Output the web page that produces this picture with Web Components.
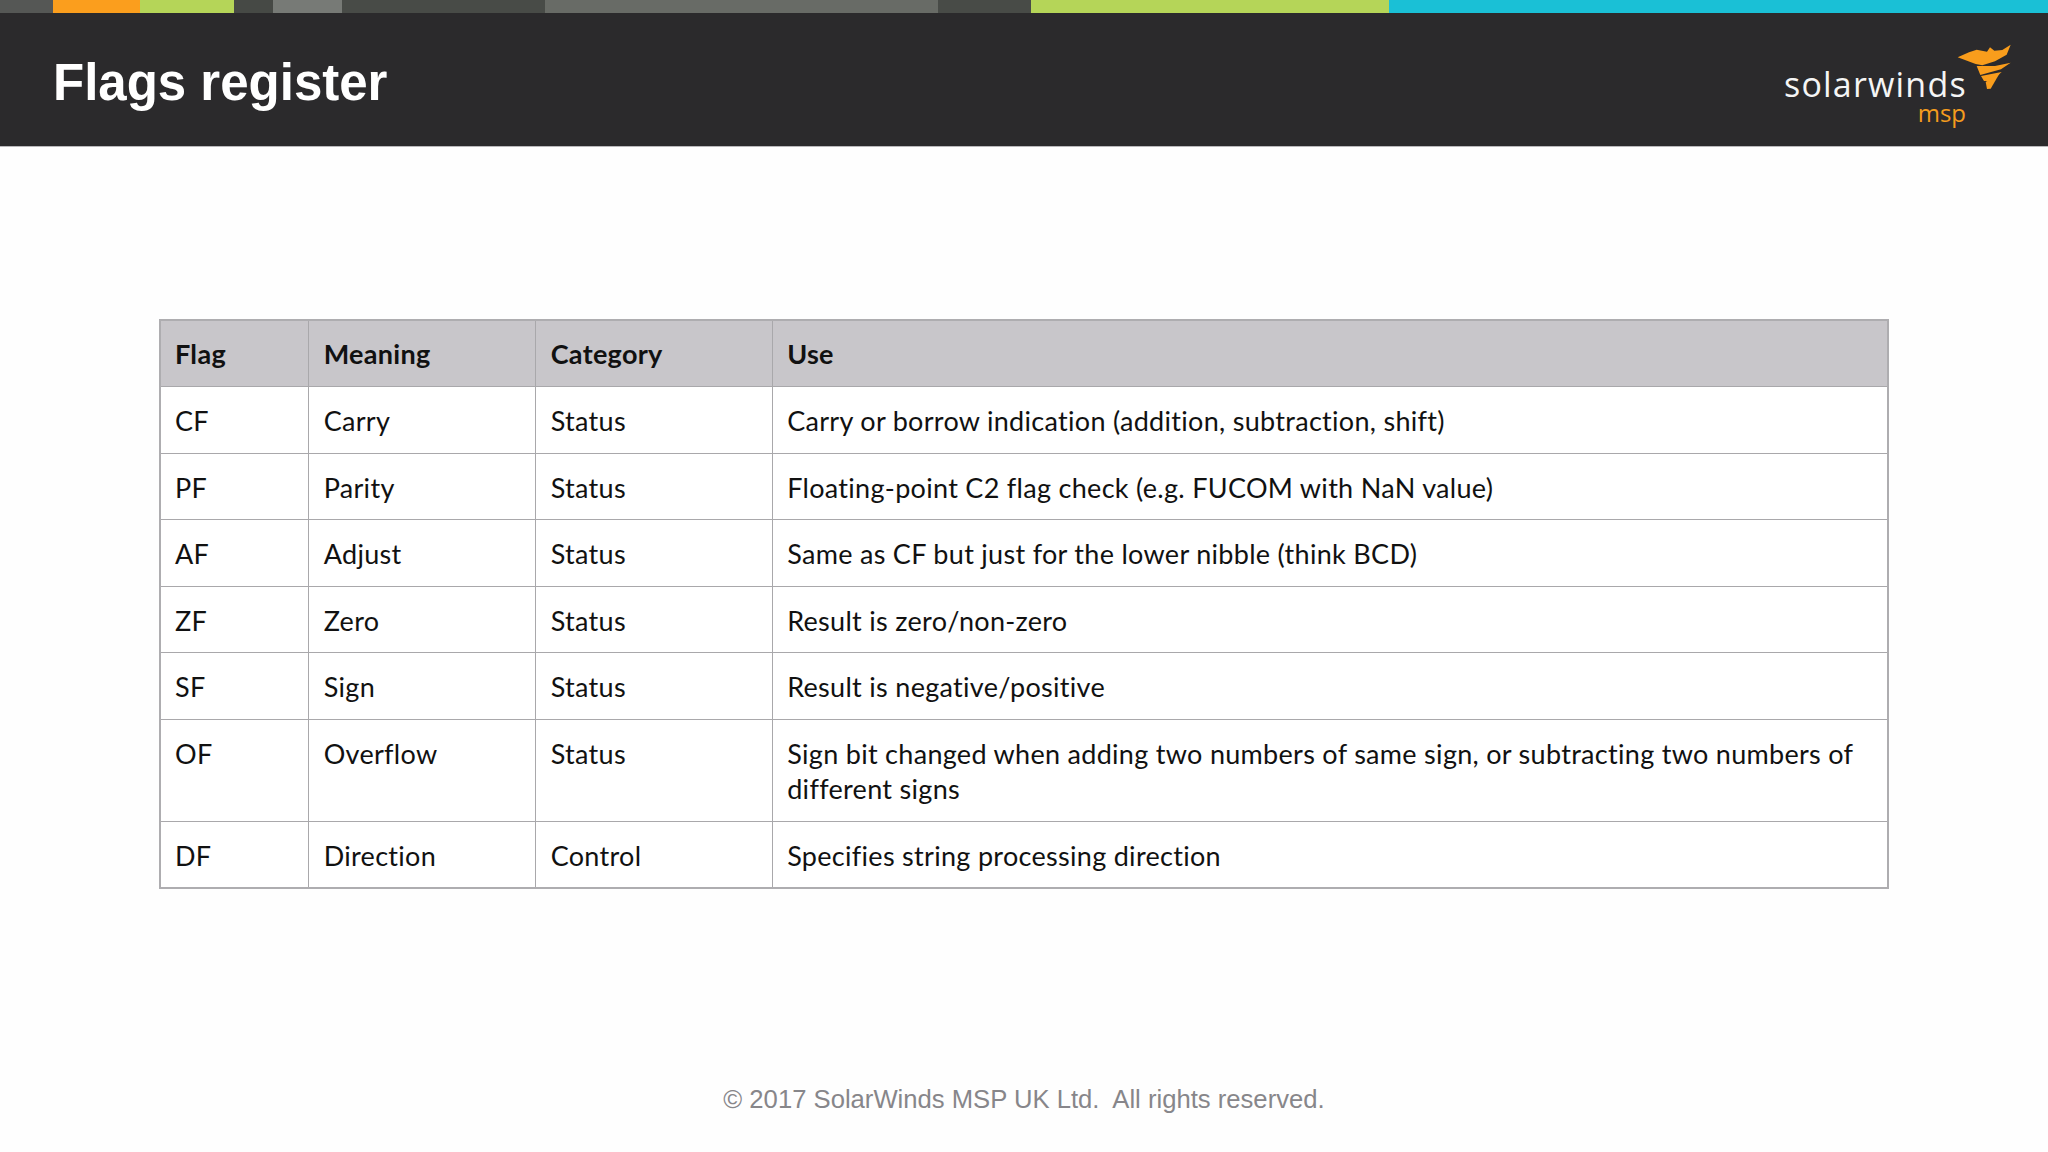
<!DOCTYPE html>
<html lang="en"><head><meta charset="utf-8"><title>Flags register</title>
<style>
html,body{margin:0;padding:0;background:#fefefe}
</style></head><body>
<slide-page>
  <brand-stripe slot="stripe"></brand-stripe>
  <slide-header slot="header">Flags register<brand-logo slot="logo"></brand-logo></slide-header>
  <flag-table>
    <flag-row head><flag-cell>Flag</flag-cell><flag-cell>Meaning</flag-cell><flag-cell>Category</flag-cell><flag-cell>Use</flag-cell></flag-row>
    <flag-row><flag-cell>CF</flag-cell><flag-cell>Carry</flag-cell><flag-cell>Status</flag-cell><flag-cell>Carry or borrow indication (addition, subtraction, shift)</flag-cell></flag-row>
    <flag-row><flag-cell>PF</flag-cell><flag-cell>Parity</flag-cell><flag-cell>Status</flag-cell><flag-cell>Floating-point C2 flag check (e.g. FUCOM with NaN value)</flag-cell></flag-row>
    <flag-row><flag-cell>AF</flag-cell><flag-cell>Adjust</flag-cell><flag-cell>Status</flag-cell><flag-cell>Same as CF but just for the lower nibble (think BCD)</flag-cell></flag-row>
    <flag-row><flag-cell>ZF</flag-cell><flag-cell>Zero</flag-cell><flag-cell>Status</flag-cell><flag-cell>Result is zero/non-zero</flag-cell></flag-row>
    <flag-row><flag-cell>SF</flag-cell><flag-cell>Sign</flag-cell><flag-cell>Status</flag-cell><flag-cell>Result is negative/positive</flag-cell></flag-row>
    <flag-row><flag-cell>OF</flag-cell><flag-cell>Overflow</flag-cell><flag-cell>Status</flag-cell><flag-cell>Sign bit changed when adding two numbers of same sign, or subtracting two numbers of different signs</flag-cell></flag-row>
    <flag-row><flag-cell>DF</flag-cell><flag-cell>Direction</flag-cell><flag-cell>Control</flag-cell><flag-cell>Specifies string processing direction</flag-cell></flag-row>
  </flag-table>
  <slide-footer slot="footer">© 2017 SolarWinds MSP UK Ltd.&nbsp; All rights reserved.</slide-footer>
</slide-page>
<script>
function def(name, html){
  customElements.define(name, class extends HTMLElement{
    constructor(){super();this.attachShadow({mode:'open'}).innerHTML=html;}
  });
}
def('slide-page',`<style>
:host{display:flex;flex-direction:column;width:2048px;height:1152px;overflow:hidden;background:#fefefe}
main{flex:1;display:flex;flex-direction:column;padding:172px 159px 0 159px}
.foot{margin-top:auto}
</style><slot name="stripe"></slot><slot name="header"></slot><main><slot></slot><div class="foot"><slot name="footer"></slot></div></main>`);
def('brand-stripe',`<style>
:host{display:flex;height:13px;background:#2b2a2c}
i{display:block;height:12.5px}
</style>
<i style="width:53px;background:#555755"></i><i style="width:87px;background:#fb9e1d"></i><i style="width:94px;background:#b5d558"></i><i style="width:39px;background:#464945"></i><i style="width:69px;background:#777a76"></i><i style="width:203px;background:#484b47"></i><i style="width:393px;background:#686b66"></i><i style="width:93px;background:#484b47"></i><i style="width:358px;background:#b5d558"></i><i style="flex:1;background:#1ac0d6"></i>`);
def('slide-header',`<style>
:host{display:flex;justify-content:space-between;height:134px;box-sizing:border-box;background:#2b2a2c;border-bottom:1px solid #b9b8bb;padding:0 38px 0 53px;color:#fff}
h1{margin:37px 0 0;font:700 51px/66px "Liberation Sans",Arial,sans-serif;}
</style><h1><slot></slot></h1><slot name="logo"></slot>`);
def('brand-logo',`<style>
:host{display:block;position:relative;width:225px;height:132px;font-family:"Open Sans",sans-serif}
.s{position:absolute;left:-1px;top:55px;font-size:34px;line-height:32px;color:#f5f5f5;letter-spacing:1.2px}
.m{position:absolute;right:44px;top:88px;font-size:24px;line-height:24px;font-weight:500;color:#f59c1e}
svg{position:absolute;left:160px;top:25px;width:75px;height:60px}
</style><span class="s">solarwinds</span><span class="m">msp</span>
<svg viewBox="0 0 225 180"><g fill="#f99d1c">
<path d="M38 58 72 43 95 35 126 41 135 28 148 38 172 36 197 20 185 50 150 70 112 82 92 78Z"/>
<path d="M95 84 150 84 197 74 168 94 106 111Z"/>
<path d="M108 114 170 102 140 130 117 129Z"/>
<path d="M122 132 164 106 137 152 126 153Z"/></g></svg>`);
def('flag-table',`<style>
:host{display:block;width:1730px;box-sizing:border-box;border:2px solid #aeadb0;background:#fff;
font:27px/35.3px Lato,sans-serif;font-variant-ligatures:none;letter-spacing:.3px;color:#111}
</style><slot></slot>`);
def('flag-row',`<style>
:host{display:grid;grid-template-columns:147px 227px 236.5px 1fr;box-sizing:border-box;border-top:1px solid #a9a8ab}
:host(:first-child){border-top:0}
:host([head]){background:#c8c6ca;font-weight:700;--pt:15px;--pb:15.2px}
</style><slot></slot>`);
def('flag-cell',`<style>
:host{display:block;padding:var(--pt,16px) 13px var(--pb,14.2px) 14.7px;border-left:1px solid #a9a8ab}
:host(:first-child){border-left:0;padding-left:14px}
</style><slot></slot>`);
def('slide-footer',`<style>
:host{display:block;height:69px;text-align:center;font:25.65px/32px "Liberation Sans",Arial,sans-serif;color:#87868a}
</style><slot></slot>`);
</script>
</body></html>
